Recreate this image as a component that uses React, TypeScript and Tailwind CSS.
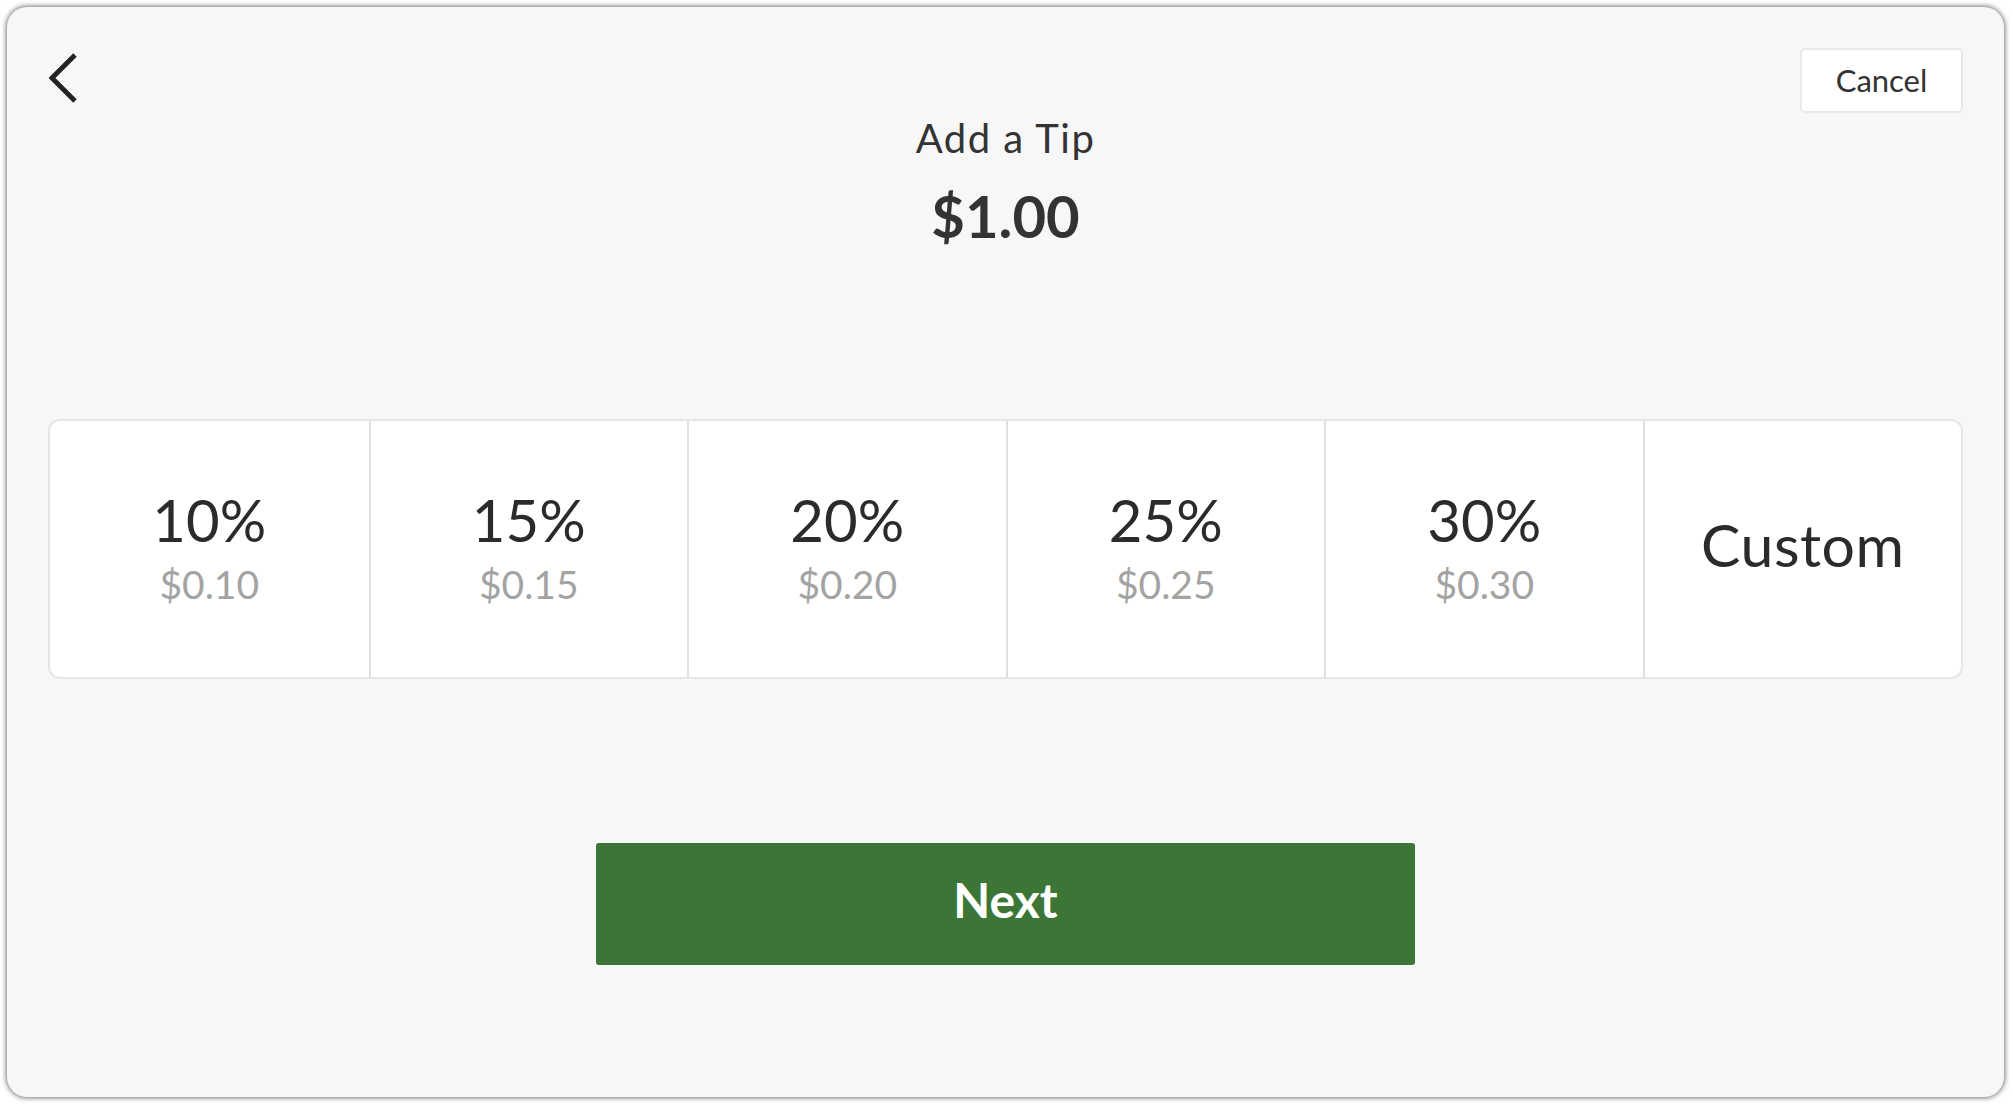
import React from "react";

const tips = [
  { pct: "10%", amt: "$0.10" },
  { pct: "15%", amt: "$0.15" },
  { pct: "20%", amt: "$0.20" },
  { pct: "25%", amt: "$0.25" },
  { pct: "30%", amt: "$0.30" },
];

const font = { fontFamily: "Lato, 'Noto Sans', sans-serif" };

const BackIcon = () => (
  <svg width="28" height="50" viewBox="0 0 28 50" fill="none">
    <path d="M26 2 L3 25 L26 48" stroke="#222" strokeWidth="4.8" />
  </svg>
);

const App = () => {
  return (
    <div className="w-[2013px] h-[1107px] bg-white pl-[7px] pt-[7px]" style={font}>
      <div className="w-[1997px] h-[1090px] rounded-[20px] bg-[#f7f7f7] shadow-[0_0_5px_1px_rgba(0,0,0,0.55)] flex flex-col items-center px-[41px] pt-[41px]">
        {/* header */}
        <div className="w-full grid grid-cols-[1fr_auto_1fr]">
          <div className="pt-[5px] pl-[1px]">
            <BackIcon />
          </div>
          <div className="flex flex-col items-center pt-[66px] text-[#333]">
            <div className="text-[40px] leading-[48px] tracking-[1.5px]">Add a Tip</div>
            <div className="mt-[22px] text-[58px] leading-[64px] font-bold">$1.00</div>
          </div>
          <div className="flex justify-end items-start">
            <button className="w-[163px] h-[65px] bg-white border-2 border-[#e8e8e8] rounded-[5px] text-[31px] text-[#333]">
              Cancel
            </button>
          </div>
        </div>

        {/* tip options */}
        <div className="mt-[171px] w-full h-[260px] grid grid-cols-6 bg-white border-2 border-[#e6e6e6] rounded-[12px] overflow-hidden">
          {tips.map((t, i) => (
            <button
              key={t.pct}
              className={`flex flex-col items-center justify-center pb-[4px] ${i > 0 ? "border-l-2 border-[#e0e0e0]" : ""}`}
            >
              <span className="text-[58px] leading-[60px] text-[#2b2b2b]">{t.pct}</span>
              <span className="mt-[14px] text-[39px] leading-[40px] text-[#a3a3a3]">{t.amt}</span>
            </button>
          ))}
          <button className="flex items-center justify-center pb-[8px] border-l-2 border-[#e0e0e0]">
            <span className="text-[59px] leading-[60px] tracking-[0.5px] text-[#2b2b2b]">Custom</span>
          </button>
        </div>

        {/* next */}
        <button className="mt-[164px] w-[819px] h-[122px] pb-[8px] rounded-[3px] bg-[#3b7636] text-white text-[48px] font-bold">
          Next
        </button>
      </div>
    </div>
  );
};

export default App;
